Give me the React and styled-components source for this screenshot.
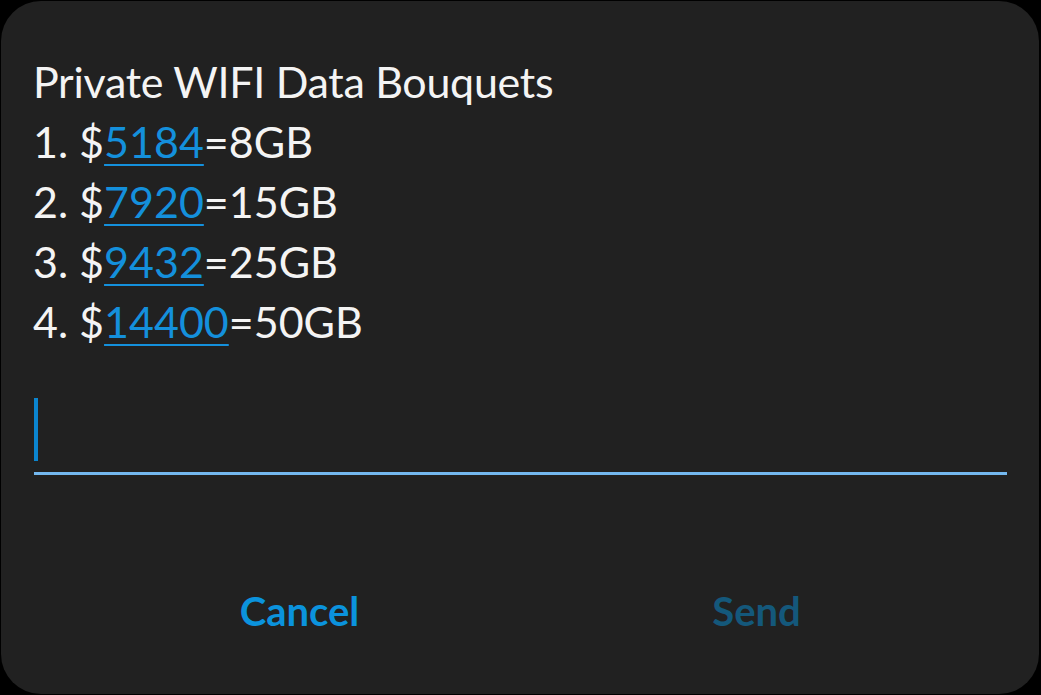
import React from 'react';
import styled, { createGlobalStyle } from 'styled-components';

const GlobalStyle = createGlobalStyle`
  html, body {
    margin: 0;
    padding: 0;
    background: #000;
    width: 100%;
    height: 100%;
  }
  #root {
    height: 100%;
  }
`

const Screen = styled.div`
  width: 1041px;
  height: 695px;
  background: #000;
  padding: 1px 2px 1px 1px;
  box-sizing: border-box;
  display: flex;
`

const Dialog = styled.div`
  flex: 1;
  background: #212121;
  border-radius: 40px;
  display: flex;
  flex-direction: column;
  padding: 51px 32px 0 32px;
  font-family: Lato, "Noto Sans", sans-serif;
  color: #f4f4f4;
`

const Message = styled.div`
  font-size: 43px;
  line-height: 60px;
`

const Line = styled.div`
  white-space: nowrap;
  letter-spacing: ${p => (p.title ? '-0.3px' : '0')};
`

const Amount = styled.a`
  color: #1490dc;
  text-decoration: underline;
  text-decoration-thickness: 2px;
  text-underline-offset: 6px;
`

const Field = styled.div`
  margin-top: 46px;
  margin-left: 1px;
  display: flex;
  flex-direction: column;
  gap: 11px;
`

const Caret = styled.div`
  width: 4px;
  height: 63px;
  background: #0b85cf;
`

const Underline = styled.div`
  height: 3px;
  background: #74b8ef;
`

const Buttons = styled.div`
  margin-top: 111px;
  display: flex;
  padding: 0 22px 0 38px;
`

const Button = styled.button`
  flex: 1;
  background: none;
  border: none;
  font-family: Lato, "Noto Sans", sans-serif;
  font-size: 40px;
  font-weight: 700;
  line-height: 50px;
  color: ${p => (p.disabled ? '#14587b' : '#0b93dd')};
  padding: 0;
  cursor: pointer;
`

const bouquets = [
  { price: '5184', size: '8GB' },
  { price: '7920', size: '15GB' },
  { price: '9432', size: '25GB' },
  { price: '14400', size: '50GB' },
]

export default function App() {
  return (
    <Screen>
      <GlobalStyle />
      <Dialog>
        <Message>
          <Line title="true">Private WIFI Data Bouquets</Line>
          {bouquets.map((b, i) => (
            <Line key={b.price}>
              {i + 1}. $<Amount>{b.price}</Amount>={b.size}
            </Line>
          ))}
        </Message>
        <Field>
          <Caret />
          <Underline />
        </Field>
        <Buttons>
          <Button>Cancel</Button>
          <Button disabled>Send</Button>
        </Buttons>
      </Dialog>
    </Screen>
  )
}
